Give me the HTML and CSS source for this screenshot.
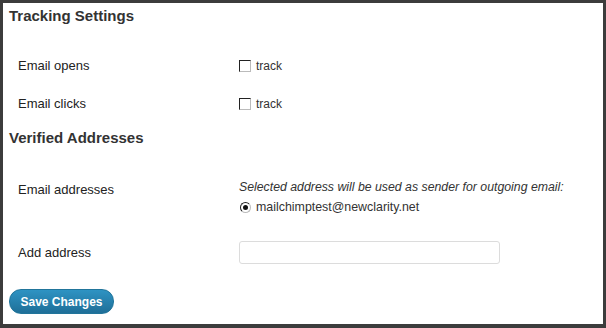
FILE: index.html
```html
<!DOCTYPE html>
<html lang="en">
<head>
    <meta charset="UTF-8">
    <title>Tracking Settings</title>
    <link rel="stylesheet" href="styles.css">
</head>
<body>
    <div class="frame">
        <form class="settings">
            <h3>Tracking Settings</h3>

            <div class="row">
                <label class="field-label">Email opens</label>
                <div class="field">
                    <label class="check"><input type="checkbox"> track</label>
                </div>
            </div>

            <div class="row">
                <label class="field-label">Email clicks</label>
                <div class="field">
                    <label class="check"><input type="checkbox"> track</label>
                </div>
            </div>

            <h3 class="second">Verified Addresses</h3>

            <div class="row row-top">
                <label class="field-label">Email addresses</label>
                <div class="field">
                    <p class="hint">Selected address will be used as sender for outgoing email:</p>
                    <label class="check address"><input type="radio" name="sender" checked> mailchimptest@newclarity.net</label>
                </div>
            </div>

            <div class="row row-input">
                <label class="field-label">Add address</label>
                <div class="field">
                    <input type="text" class="text-input">
                </div>
            </div>

            <button type="button" class="save">Save Changes</button>
        </form>
    </div>
</body>
</html>
```

FILE: styles.css
```css
html, body {
    margin: 0;
    padding: 0;
}

body {
    font-family: Arial, "Liberation Sans", sans-serif;
    color: #222;
    background: #3c3c3c;
}

.frame {
    box-sizing: border-box;
    width: 606px;
    height: 328px;
    border: 3px solid #3c3c3c;
    border-bottom-width: 4px;
    background-color: #fff;
}

.settings {
    padding-left: 6px;
}

h3 {
    margin: 3px 0 0;
    font-size: 15px;
    line-height: 20px;
    font-weight: bold;
    color: #333;
}

h3.second {
    margin-top: 5px;
}

.row {
    display: grid;
    grid-template-columns: 230px 1fr;
    align-items: center;
    height: 38px;
}

h3 + .row {
    margin-top: 21px;
}

.field-label {
    padding-left: 9px;
    font-size: 13px;
    line-height: 18px;
}

.check {
    display: flex;
    align-items: center;
    font-size: 12px;
    line-height: 18px;
    color: #333;
}

.check.address {
    font-size: 12.4px;
}

.check input {
    -webkit-appearance: none;
    appearance: none;
    box-sizing: border-box;
    width: 12px;
    height: 12px;
    margin: 0 5px 0 0;
    background: #fff;
    border: 1px solid #bbb;
    border-top-color: #222;
    border-left-color: #222;
    position: relative;
}

.check input[type="radio"] {
    width: 11px;
    height: 11px;
    border-radius: 50%;
    margin-left: 1px;
}

.check input[type="radio"]:checked::after {
    content: "";
    position: absolute;
    left: 2px;
    top: 2px;
    width: 5px;
    height: 5px;
    border-radius: 50%;
    background: #111;
}

.row.row-top {
    margin-top: 30px;
    height: auto;
    align-items: start;
}

.row-top .field-label {
    padding-top: 3px;
}

.hint {
    margin: 0 0 2px;
    font-size: 12.3px;
    line-height: 18px;
    font-style: italic;
    color: #333;
}

.row.row-input {
    margin-top: 25px;
    height: 23px;
}

.text-input {
    display: block;
    box-sizing: border-box;
    width: 261px;
    height: 23px;
    margin: 0;
    border: 1px solid #dcdcdc;
    border-radius: 3px;
    background: #fff;
}

.save {
    display: block;
    margin-top: 25px;
    box-sizing: border-box;
    width: 105px;
    height: 25px;
    padding: 0;
    font-family: Arial, "Liberation Sans", sans-serif;
    font-size: 12px;
    font-weight: bold;
    color: #fff;
    background: linear-gradient(to bottom, #2e93c3, #1f6f98);
    border: 1px solid #21759b;
    border-radius: 12px;
    cursor: pointer;
}
```
